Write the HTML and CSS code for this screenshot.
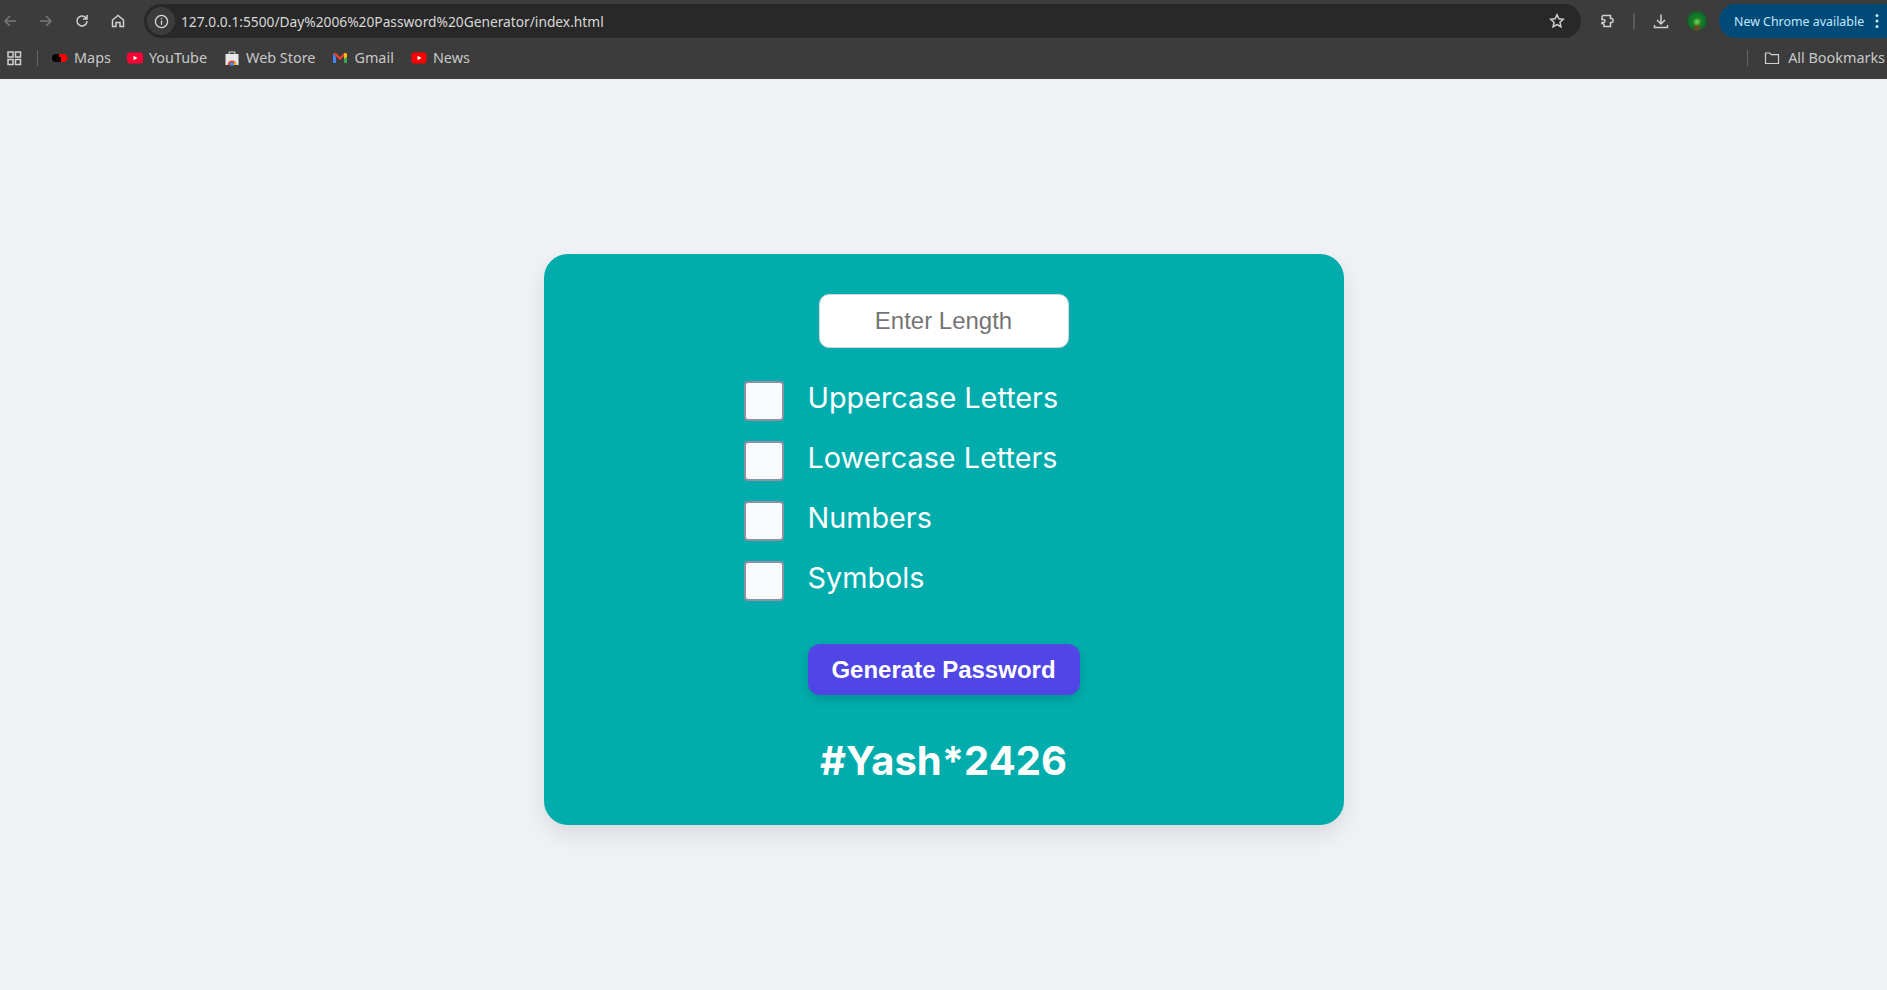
FILE: index.html
```html
<!DOCTYPE html>
<html lang="en">
<head>
    <meta charset="UTF-8">
    <meta name="viewport" content="width=device-width, initial-scale=1.0">
    <title>Password Generator</title>
    <link rel="stylesheet" href="styles.css">
</head>
<body>
    <header class="browser">
        <div class="toolbar">
            <div class="nav-btns">
                <svg class="icon dim" viewBox="0 0 16 16"><path d="M14 8H3M8 3L3 8l5 5"/></svg>
                <svg class="icon dim" viewBox="0 0 16 16"><path d="M2 8h11M8 3l5 5-5 5"/></svg>
                <svg class="icon" viewBox="0 0 16 16"><path d="M13 8a5 5 0 1 1-1.500-3.600L13 6M13 2v4H9"/></svg>
                <svg class="icon" viewBox="0 0 16 16"><path d="M2.500 7L8 2.500 13.500 7v6.500h-3.500V9.500H6v4H2.500z"/></svg>
            </div>
            <div class="omnibox">
                <span class="site-info">
                    <svg class="icon-small" viewBox="0 0 16 16"><circle cx="8" cy="8" r="6.500"/><path d="M8 7v4.500M8 4.300v1.400"/></svg>
                </span>
                <span class="url">127.0.0.1:5500/Day%2006%20Password%20Generator/index.html</span>
                <svg class="icon star" viewBox="0 0 16 16"><path d="M8 1.800l1.900 4 4.400.5-3.300 3 .9 4.400L8 11.500l-3.900 2.200.9-4.400-3.300-3 4.400-.5z"/></svg>
            </div>
            <div class="tool-icons">
                <svg class="icon" viewBox="0 0 16 16"><path d="M3 2.500h7.500v3h1.200a1.300 1.300 0 0 1 1.300 1.300v1.400a1.300 1.300 0 0 1-1.300 1.300h-1.200v4H4v-1.500a1.500 1.500 0 0 0-1.500-1.500H2V9.500h1.500a1.500 1.500 0 0 0 0-3H2V4.500A2 2 0 0 1 3 2.500z"/></svg>
                <span class="tool-sep"></span>
                <svg class="icon" viewBox="0 0 16 16"><path d="M8 1.500v9M4 7l4 4 4-4M1.500 12v2.500h13V12"/></svg>
                <span class="avatar"></span>
            </div>
            <div class="update-pill">
                <span>New Chrome available</span>
                <svg class="dots" viewBox="0 0 4 16"><circle cx="2" cy="2.500" r="1.500"/><circle cx="2" cy="8" r="1.500"/><circle cx="2" cy="13.500" r="1.500"/></svg>
            </div>
        </div>
        <nav class="bookmarks">
            <svg class="icon apps" viewBox="0 0 16 16"><path d="M2 2h5v5H2zM9.500 2h5v5h-5zM2 9.500h5v5H2zM9.500 9.500h5v5h-5z"/></svg>
            <span class="bar-sep"></span>
            <a class="bookmark first">
                <svg class="fav" viewBox="0 0 16 16"><rect x="0" y="4" width="9" height="8" rx="4" fill="#000"/><path d="M7 4h6l3 4-3 4H7z" fill="#f00"/><rect x="6" y="7" width="3" height="5" fill="#000"/></svg>
                Maps
            </a>
            <a class="bookmark">
                <svg class="fav" viewBox="0 0 16 16"><rect x="0" y="2.500" width="16" height="11" rx="3" fill="#ff0033"/><path d="M6.500 5.800L10.500 8l-4 2.200z" fill="#fff"/></svg>
                YouTube
            </a>
            <a class="bookmark">
                <svg class="fav" viewBox="0 0 16 16"><rect x="1.500" y="4" width="13" height="11" fill="#e8e8e8"/><path d="M5 4V2h6v2" fill="none" stroke="#ddd"/><path d="M3.500 15a4.500 4.500 0 0 1 9 0z" fill="#ea4335"/><path d="M8 15l4.500 0a4.500 4.500 0 0 0-1-3z" fill="#fbbc04"/><circle cx="8" cy="14" r="2" fill="#4285f4"/></svg>
                Web Store
            </a>
            <a class="bookmark">
                <svg class="fav" viewBox="0 0 16 16"><path d="M1 3.500V13h3V7z" fill="#4285f4"/><path d="M15 3.500V13h-3V7z" fill="#34a853"/><path d="M1 3.500L4 3l4 4 4-4 3 .5L8 10z" fill="#ea4335"/><path d="M12 3l3 .5V7l-3 2z" fill="#fbbc04"/></svg>
                Gmail
            </a>
            <a class="bookmark">
                <svg class="fav" viewBox="0 0 16 16"><rect x="0.500" y="2.500" width="15" height="11" rx="3" fill="#f00"/><path d="M6.500 5.800L10.500 8l-4 2.200z" fill="#fff"/></svg>
                News
            </a>
            <span class="bar-sep right"></span>
            <a class="bookmark all">
                <svg class="icon folder" viewBox="0 0 16 16"><path d="M1.500 3h4.200l1.500 1.700h7.300v8.800h-13z"/></svg>
                All Bookmarks
            </a>
        </nav>
    </header>

    <main class="page">
        <div class="container">
            <input class="length-input" type="text" placeholder="Enter Length">
            <div class="options">
                <label class="option"><input type="checkbox"><span>Uppercase Letters</span></label>
                <label class="option"><input type="checkbox"><span>Lowercase Letters</span></label>
                <label class="option"><input type="checkbox"><span>Numbers</span></label>
                <label class="option"><input type="checkbox"><span>Symbols</span></label>
            </div>
            <button class="generate" type="button">Generate Password</button>
            <div class="result">#Yash*2426</div>
        </div>
    </main>
</body>
</html>
```

FILE: styles.css
```css
* {
    box-sizing: border-box;
}
html, body {
    margin: 0;
    height: 100%;
    overflow: hidden;
}
body {
    font-family: Inter, "Liberation Sans", sans-serif;
    background-color: #f0f2f5;
    display: flex;
    flex-direction: column;
}

/* browser chrome */
.browser {
    height: 79px;
    flex-shrink: 0;
    background-color: #3c3c3c;
    font-family: "Noto Sans", sans-serif;
    color: #d5d5d5;
    overflow: hidden;
}
.toolbar {
    height: 42px;
    display: flex;
    align-items: center;
}
.toolbar > * {
    flex-shrink: 0;
}
.icon {
    width: 16px;
    height: 16px;
    fill: none;
    stroke: #d0d0d0;
    stroke-width: 1.500;
    flex-shrink: 0;
}
.icon.dim {
    stroke: #777;
}
.nav-btns {
    display: flex;
    gap: 20px;
    padding-left: 2px;
    width: 144px;
}
.omnibox {
    width: 1437px;
    height: 34px;
    border-radius: 17px;
    background-color: #282828;
    display: flex;
    align-items: center;
    padding-right: 16px;
}
.site-info {
    width: 28px;
    height: 28px;
    margin-left: 3px;
    border-radius: 50%;
    background-color: #3c3c3c;
    display: flex;
    align-items: center;
    justify-content: center;
}
.icon-small {
    width: 15px;
    height: 15px;
    fill: none;
    stroke: #d8d8d8;
    stroke-width: 1.400;
}
.url {
    margin-left: 6px;
    font-size: 13.750px;
    color: #d8d8d8;
    flex: 1;
    white-space: nowrap;
}
.tool-icons {
    display: flex;
    align-items: center;
    width: 138px;
    padding-left: 18px;
}
.tool-icons .icon:first-child {
    margin-left: 1px;
    margin-right: -1px;
}
.tool-sep {
    width: 2px;
    height: 16px;
    margin: 0 18px;
    background-color: #5a5a5a;
}
.avatar {
    width: 20px;
    height: 20px;
    margin-left: 18px;
    border-radius: 50%;
    background:
        radial-gradient(circle at 50% 55%, #7dd84a 0, rgba(125, 216, 74, 0) 30%),
        radial-gradient(circle at 50% 85%, #8a3a20 0, rgba(138, 58, 32, 0) 25%),
        radial-gradient(circle at 50% 50%, #1d8a2c 0, #12702a 55%, #0d4a1e 85%, #2c3a20 100%);
}
.update-pill {
    width: 180px;
    height: 34px;
    border-radius: 17px 0 0 17px;
    background-color: #004a77;
    color: #c2e7ff;
    font-size: 12.400px;
    display: flex;
    align-items: center;
    padding-left: 15px;
    white-space: nowrap;
}
.dots {
    width: 4px;
    height: 16px;
    margin-left: 11px;
    fill: #c2e7ff;
}
.bookmarks {
    height: 31px;
    display: flex;
    align-items: center;
    font-size: 14.400px;
    color: #c8c8c8;
}
.apps {
    margin-left: 6px;
}
.bar-sep {
    width: 1px;
    height: 16px;
    margin-left: 15px;
    background-color: #666;
}
.bar-sep.right {
    margin-left: auto;
}
.bookmark {
    display: flex;
    align-items: center;
    gap: 6px;
    margin-left: 17px;
    white-space: nowrap;
}
.bookmark.first {
    margin-left: 14px;
}
.bookmark.first + .bookmark {
    margin-left: 16px;
}
.bookmark.all {
    gap: 8px;
    margin-left: 16px;
    margin-right: 2px;
}
.fav {
    width: 16px;
    height: 16px;
}
.folder {
    stroke-width: 1.200;
}

/* password generator */
.page {
    flex: 1;
    display: flex;
    justify-content: center;
    padding-top: 175px;
}
.container {
    width: 800px;
    height: 571px;
    padding-top: 40px;
    background-color: #01acac;
    border-radius: 24px;
    box-shadow: 0 10px 25px rgba(0, 0, 0, 0.1);
    display: flex;
    flex-direction: column;
    align-items: center;
    color: #fff;
}
.length-input {
    width: 250px;
    height: 54px;
    border: 1px solid #d1d5db;
    border-radius: 10px;
    background: #fff;
    font-family: "Liberation Sans", sans-serif;
    font-size: 24px;
    text-align: center;
    outline: none;
}
.length-input::placeholder {
    color: #757575;
}
.options {
    width: 400px;
    margin-top: 33px;
    display: flex;
    flex-direction: column;
    gap: 20px;
}
.option {
    display: flex;
    gap: 24px;
    height: 40px;
    font-size: 28.800px;
    line-height: 34px;
}
.option input {
    appearance: none;
    width: 40px;
    height: 40px;
    margin: 0;
    flex-shrink: 0;
    background-color: #f9fafb;
    border: 2px solid #9090a4;
    border-radius: 4px;
}
.generate {
    margin-top: 43px;
    width: 272px;
    height: 51px;
    border: none;
    border-radius: 12px;
    background-color: #4f46e5;
    color: #fff;
    font-family: "Liberation Sans", sans-serif;
    font-size: 24px;
    font-weight: 700;
    box-shadow: 0 4px 8px rgba(0, 0, 0, 0.15);
}
.result {
    margin-top: 42px;
    font-size: 40px;
    font-weight: 700;
    line-height: 48px;
}
```
